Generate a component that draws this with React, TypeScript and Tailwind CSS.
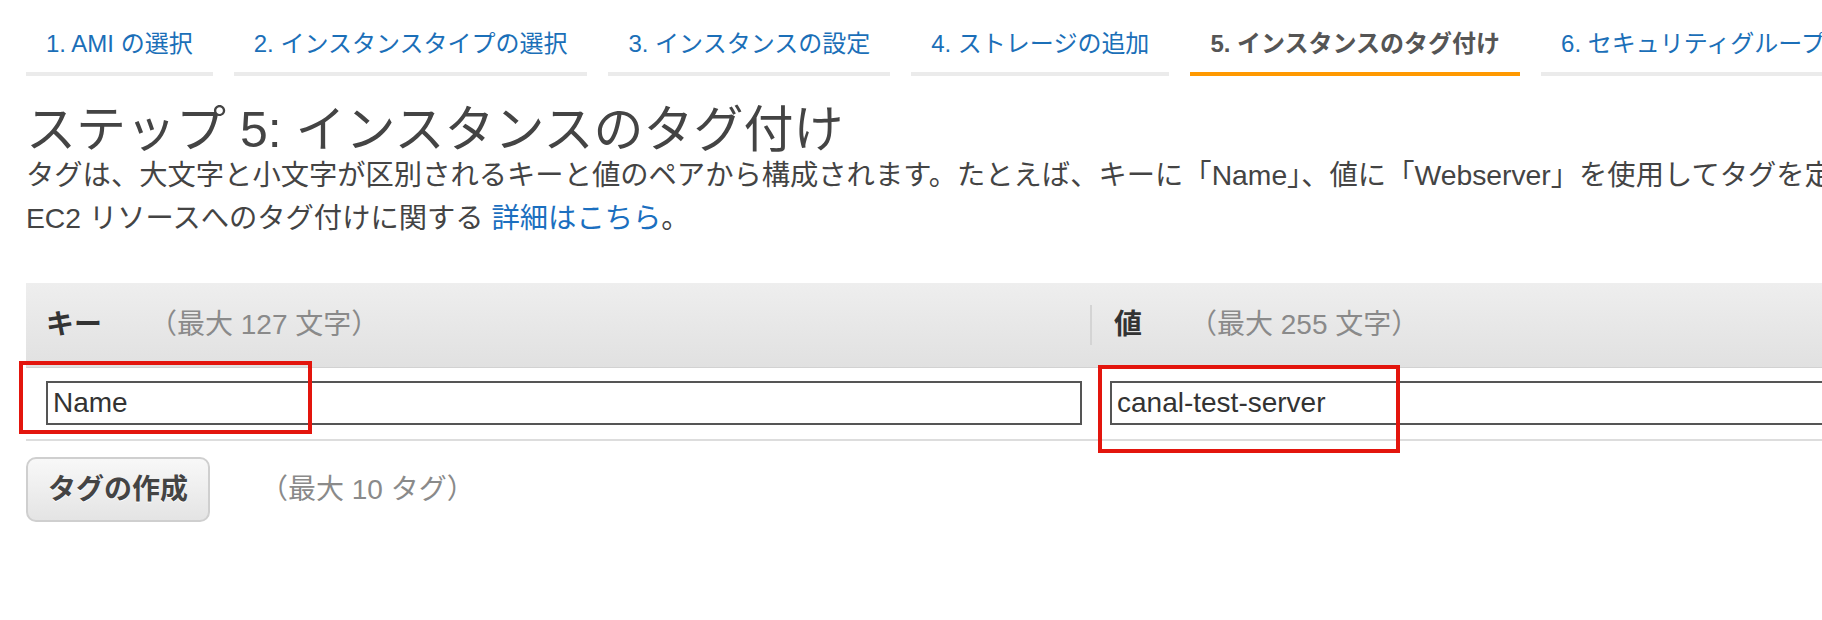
const tabs = [
  "1. AMI の選択",
  "2. インスタンスタイプの選択",
  "3. インスタンスの設定",
  "4. ストレージの追加",
  "5. インスタンスのタグ付け",
  "6. セキュリティグループの設定",
  "7. 確認",
];

export default function App() {
  return (
    <div className="relative w-[1822px] h-[620px] overflow-hidden bg-white font-['Liberation_Sans','Noto_Sans_CJK_JP',sans-serif] text-[#444]">
      {/* wizard steps */}
      <div className="flex gap-[21px] pl-[26px] whitespace-nowrap">
        {tabs.map((t, i) =>
          i === 4 ? (
            <div
              key={t}
              className="shrink-0 px-[20px] pt-[28px] pb-[12px] text-[24px] leading-[32px] font-bold text-[#555] border-b-[4px] border-[#ff9900]"
            >
              {t}
            </div>
          ) : (
            <div
              key={t}
              className="shrink-0 px-[20px] pt-[28px] pb-[12px] text-[24px] leading-[32px] text-[#1b6fb8] border-b-[4px] border-[#ebebeb]"
            >
              {t}
            </div>
          )
        )}
      </div>

      <div className="pl-[26px]">
        <h1 className="mt-[28px] text-[50px] leading-[52px] font-normal text-[#444] whitespace-nowrap">
          ステップ 5: インスタンスのタグ付け
        </h1>
        <p className="-mt-[2px] text-[28.3px] leading-[43px] whitespace-nowrap">
          タグは、大文字と小文字が区別されるキーと値のペアから構成されます。たとえば、キーに「Name」、値に「Webserver」を使用してタグを定義できます。
        </p>
        <p className="text-[28.3px] leading-[43px] whitespace-nowrap">
          EC2 リソースへのタグ付けに関する <span className="text-[#1b6fbf]">詳細はこちら</span>。
        </p>

        {/* tag table */}
        <div className="mt-[43px] w-[2128px]">
          <div className="flex h-[85px] bg-gradient-to-b from-[#eeeeee] to-[#e1e1e1] border-b border-[#d2d2d2] text-[28px]">
            <div className="w-[1064px] shrink-0 flex items-center pl-[20px]">
              <span className="font-bold text-[#333]">キー</span>
              <span className="ml-[47px] text-[#8a8a8a]">（最大 127 文字）</span>
            </div>
            <div className="w-[1064px] shrink-0 flex items-center">
              <div className="h-[40px] border-l-2 border-[#d4d4d4]" />
              <span className="ml-[22px] font-bold text-[#333]">値</span>
              <span className="ml-[47px] text-[#8a8a8a]">（最大 255 文字）</span>
            </div>
          </div>
          <div className="flex pt-[13px] pb-[14px] border-b-2 border-[#dddddd]">
            <div className="w-[1064px] shrink-0 pl-[20px] pr-[8px]">
              <div className="h-[44px] border-2 border-[#555] pl-[5px] flex items-center text-[28px] text-[#333]">
                Name
              </div>
            </div>
            <div className="w-[1064px] shrink-0 pl-[20px]">
              <div className="h-[44px] border-2 border-[#555] pl-[5px] flex items-center text-[28px] text-[#333]">
                canal-test-server
              </div>
            </div>
          </div>
        </div>

        <div className="mt-[16px] flex items-center">
          <button className="h-[65px] px-[20px] rounded-[10px] border-2 border-[#cfcfcf] bg-gradient-to-b from-[#f8f8f8] to-[#e4e4e4] text-[28px] font-bold text-[#444] [text-shadow:0_1px_0_#fff]">
            タグの作成
          </button>
          <span className="ml-[50px] text-[28px] text-[#8a8a8a]">（最大 10 タグ）</span>
        </div>
      </div>

      {/* red annotation boxes */}
      <div className="absolute left-[19px] top-[361px] w-[293px] h-[73px] border-4 border-[#e3150d]" />
      <div className="absolute left-[1098px] top-[365px] w-[302px] h-[88px] border-4 border-[#e3150d]" />
    </div>
  );
}
